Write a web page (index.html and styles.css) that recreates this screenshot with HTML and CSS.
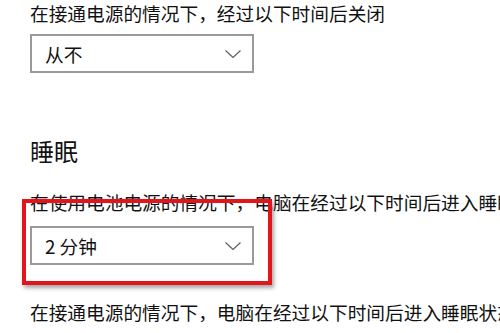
FILE: index.html
```html
<!DOCTYPE html>
<html lang="zh-CN">
<head>
<meta charset="utf-8">
<link rel="stylesheet" href="styles.css">
</head>
<body>
<div class="page">
  <p class="desc first">在接通电源的情况下，经过以下时间后关闭</p>
  <div class="select sel1">
    <span class="value">从不</span>
    <svg class="chev" width="16" height="9" viewBox="0 0 16 9"><polyline points="0.5,0.5 8,7.5 15.5,0.5" fill="none" stroke="#5a5a5a" stroke-width="1.1"/></svg>
  </div>
  <h2 class="heading">睡眠</h2>
  <p class="desc second">在使用电池电源的情况下，电脑在经过以下时间后进入睡眠状态</p>
  <div class="select sel2">
    <span class="value">2 分钟</span>
    <svg class="chev" width="16" height="9" viewBox="0 0 16 9"><polyline points="0.5,0.5 8,7.5 15.5,0.5" fill="none" stroke="#5a5a5a" stroke-width="1.1"/></svg>
  </div>
  <p class="desc third">在接通电源的情况下，电脑在经过以下时间后进入睡眠状态</p>
  <div class="highlight"></div>
</div>
</body>
</html>
```
FILE: styles.css
```css
html, body {
  margin: 0;
  padding: 0;
  background: #ffffff;
  overflow: hidden;
}
.page {
  position: relative;
  width: 500px;
  height: 333px;
  padding-left: 30px;
  box-sizing: border-box;
  font-family: "Noto Sans CJK SC", "Noto Sans", sans-serif;
  color: #111111;
  overflow: hidden;
}
.desc {
  margin: 0;
  font-size: 18.7px;
  line-height: 25px;
  white-space: nowrap;
}
.first { margin-top: 0; }
.select {
  width: 224px;
  height: 39px;
  box-sizing: border-box;
  border: 2px solid #9a9a9a;
  display: flex;
  align-items: center;
  justify-content: space-between;
  padding: 0 11px 0 13px;
  font-size: 18.7px;
  color: #111111;
}
.sel1 { margin-top: 9px; }
.chev { display: block; margin-top: 1px; }
.heading {
  margin: 62px 0 0 0;
  font-size: 24px;
  line-height: 32px;
  font-weight: normal;
}
.second { margin-top: 22px; }
.sel2 { margin-top: 12px; }
.third { margin-top: 34px; }
.highlight {
  position: absolute;
  left: 22px;
  top: 199px;
  width: 250px;
  height: 86px;
  box-sizing: border-box;
  border: 4px solid #e3151c;
  box-shadow: 2px 3px 4px rgba(0, 0, 0, 0.35);
}
```
